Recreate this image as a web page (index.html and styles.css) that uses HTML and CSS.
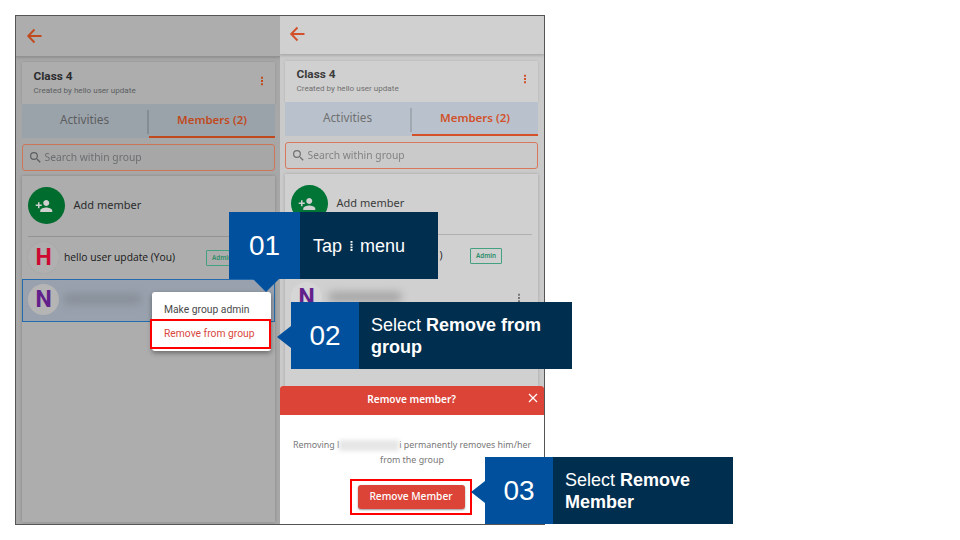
FILE: index.html
```html
<!DOCTYPE html>
<html lang="en">
<head>
<meta charset="utf-8">
<title>Remove a group member</title>
<link rel="stylesheet" href="styles.css">
</head>
<body>
<svg class="defs" width="0" height="0">
  <symbol id="back" viewBox="0 0 16 16"><path d="M15 8H2M8 1.5L1.7 8L8 14.5" fill="none" stroke="currentColor" stroke-width="1.9"/></symbol>
  <symbol id="dots" viewBox="0 0 4 10"><path d="M1 0.8h2v2H1zM1 4h2v2H1zM1 7.2h2v2H1z" fill="currentColor"/></symbol>
  <symbol id="search" viewBox="3 3 18 18"><path fill="currentColor" d="M15.5 14h-.79l-.28-.27A6.47 6.47 0 0 0 16 9.5 6.5 6.5 0 1 0 9.5 16c1.61 0 3.09-.59 4.23-1.57l.27.28v.79l5 4.99L20.49 19l-4.99-5zm-6 0a4.5 4.5 0 1 1 0-9 4.5 4.5 0 0 1 0 9z"/></symbol>
  <symbol id="person-add" viewBox="0 3 24 18"><path fill="currentColor" d="M15 12c2.21 0 4-1.79 4-4s-1.79-4-4-4-4 1.79-4 4 1.79 4 4 4zm-9-2V7H4v3H1v2h3v3h2v-3h3v-2H6zm9 4c-2.67 0-8 1.34-8 4v2h16v-2c0-2.66-5.33-4-8-4z"/></symbol>
</svg>
<main class="frame">
  <section class="phone phone-left">
    <header class="appbar"><svg class="back"><use href="#back"/></svg></header>
    <div class="body">
      <div class="group">
        <div><h1>Class 4</h1><p>Created by hello user update</p></div>
        <svg class="dots"><use href="#dots"/></svg>
      </div>
      <nav class="tabs"><span>Activities</span><i></i><b>Members (2)</b></nav>
      <div class="search"><svg><use href="#search"/></svg><span>Search within group</span></div>
      <div class="members">
        <div class="add"><div class="add-icon"><svg><use href="#person-add"/></svg></div><span>Add member</span></div>
        <div class="row"><div class="avatar h">H</div><span class="name">hello user update (You)</span><em>Admin</em></div>
        <div class="row selected"><div class="avatar n">N</div><span class="redacted"></span></div>
      </div>
    </div>
    <div class="menu"><div>Make group admin</div><div class="danger">Remove from group</div></div>
  </section>
  <section class="phone phone-right">
    <header class="appbar"><svg class="back"><use href="#back"/></svg></header>
    <div class="body">
      <div class="group">
        <div><h1>Class 4</h1><p>Created by hello user update</p></div>
        <svg class="dots"><use href="#dots"/></svg>
      </div>
      <nav class="tabs"><span>Activities</span><i></i><b>Members (2)</b></nav>
      <div class="search"><svg><use href="#search"/></svg><span>Search within group</span></div>
      <div class="members">
        <div class="add"><div class="add-icon"><svg><use href="#person-add"/></svg></div><span>Add member</span></div>
        <div class="row"><span class="name">)</span><em>Admin</em></div>
        <div class="row"><div class="avatar n">N</div><span class="redacted"></span><svg class="dots"><use href="#dots"/></svg></div>
      </div>
    </div>
    <div class="sheet">
      <div class="sheet-head"><span>Remove member?</span><svg viewBox="0 0 10 10"><path d="M1 1L9 9M9 1L1 9" stroke="#fff" stroke-width="1.2"/></svg></div>
      <p><span>Removing l</span><i class="smudge"></i><span>i permanently removes him/her</span><br><span>from the group</span></p>
      <div class="target"><button>Remove Member</button></div>
    </div>
  </section>
</main>
<div class="callout one"><div class="num">01</div><div class="tip">Tap <svg viewBox="0 0 4 10"><path d="M1 0h2v1.8H1zM1 2.7h2v1.8H1zM1 5.4h2v1.8H1zM1 8.1h2v1.8H1z" fill="#fff"/></svg> menu</div></div>
<div class="callout two"><div class="num">02</div><div class="tip"><p>Select <b>Remove from<br>group</b></p></div></div>
<div class="callout three"><div class="num">03</div><div class="tip"><p>Select <b>Remove<br>Member</b></p></div></div>
</body>
</html>
```
FILE: styles.css
```css
* { box-sizing: border-box; }
body { margin: 0; padding: 15px; width: 960px; height: 540px; overflow: hidden; background: #fff; font-family: "Noto Sans", sans-serif; }
h1, p { margin: 0; }
svg { display: block; flex: none; }
.defs { position: absolute; }
.frame { width: 530px; height: 510px; border: 1px solid #555; display: grid; grid-template-columns: 264px 264px; overflow: hidden; }
.phone { position: relative; height: 508px; overflow: hidden; display: flex; flex-direction: column; }
.phone-left { --page: #a7a7a7; --card: #adadad; --line: #929292; --tab: #9ba3aa; --accent: #c04a1e; --ink: #2b2c2e; --mute: #5c5f62; --edge: #cc7557; --green: #006c2e; --ring: #b5b5b5; background: var(--page); }
.phone-right { --page: #cacaca; --card: #d0d0d0; --line: #b0b0b0; --tab: #b9c2cc; --accent: #d2512a; --ink: #3b3b3b; --mute: #707070; --edge: #d9775b; --green: #007536; --ring: #d6d6d6; background: var(--page); }
.appbar { height: 41px; flex: none; background: var(--card); border-bottom: 1px solid var(--line); box-shadow: 0 1px 2px #0002; padding: 12px 0 0 10px; color: var(--accent); }
.phone-right .appbar { height: 39px; padding: 10px 0 0 9px; }
.back { width: 17px; height: 16px; }
.body { flex: 1; display: flex; flex-direction: column; padding: 5px 5px 2px 6px; }
.phone-right .body { padding: 6px 6px 0 5px; }
.group { height: 42px; background: var(--card); display: flex; justify-content: space-between; padding: 8px 11px 0 11.5px; box-shadow: 0 0 2px #0002; }
.phone-right .group { height: 41px; padding-top: 7px; }
h1 { font: 700 11.8px/13px Roboto, sans-serif; color: var(--ink); }
.group p { font: 8.08px/12px Roboto, sans-serif; margin-top: 1.5px; color: var(--mute); white-space: nowrap; }
.dots { width: 4px; height: 10px; color: var(--accent); margin-top: 6px; }
.tabs { height: 34px; background: var(--tab); display: grid; grid-template-columns: 125px 2px 1fr; text-align: center; font-size: 11.8px; line-height: 31px; color: var(--mute); }
.tabs i { background: #858d94; height: 24px; margin-top: 6px; }
.phone-right .tabs i { background: #a1a8b0; }
.tabs b { color: var(--accent); border-bottom: 2px solid var(--accent); font-weight: 600; font-size: 11.5px; }
.search { height: 27px; margin-top: 6px; border: 1px solid var(--edge); border-radius: 3px; display: flex; align-items: center; padding-left: 7px; gap: 3.5px; color: var(--mute); font-size: 10.3px; }
.search span { opacity: .8; margin-top: -2px; }
.search svg { width: 11px; height: 11px; }
.members { flex: 1; margin-top: 5px; background: var(--card); box-shadow: 0 0 3px #0003; display: flex; flex-direction: column; }
.add { height: 61px; margin: 0 6px; border-bottom: 1px solid var(--line); display: flex; align-items: center; gap: 8.5px; font-size: 11px; color: var(--ink); flex: none; }
.add > span { margin-top: -4px; }
.add-icon { width: 37px; height: 37px; border-radius: 50%; background: var(--green); display: grid; place-items: center; color: #d0d0d0; margin-top: -1px; padding-right: 5px; }
.add-icon svg { width: 18px; height: 14px; }
.row { height: 42px; flex: none; display: flex; align-items: center; padding-left: 6px; position: relative; }
.avatar { width: 31px; height: 31px; border-radius: 50%; background: var(--ring); font: 700 23px/31px Roboto, sans-serif; text-align: center; flex: none; margin-top: -2px; }
.phone-right .avatar { margin-top: -1px; }
.h { color: #cd0932; background: #b0b0b0; box-shadow: 0 0 2px #0001; } .n { color: #62208b; }
.name { font: 10.3px "Open Sans", sans-serif; margin: -2px 0 0 5px; color: #171717; width: 142px; white-space: nowrap; }
.phone-right .name { margin-left: 144.5px; width: 34.5px; padding-left: 4px; }
.row em { font: 600 6.3px/13px "Noto Sans", sans-serif; color: #2b8d68; border: 1px solid #43a180; height: 16px; width: 32px; text-align: center; border-radius: 1px; }
.selected { height: 43px; background: #98a1ad; border: 1px solid #246bad; padding-left: 5px; }
.selected .avatar { margin-top: -2px; }
.redacted { width: 77px; height: 10px; margin: -3px 0 0 5px; background: #777c84; filter: blur(4px); opacity: .5; }
.phone-right .redacted { background: #777; width: 72px; margin-left: 7px; }
.row .dots { color: #777; margin: 0 0 0 115.5px; }
.menu { position: absolute; left: 136px; top: 276px; width: 119px; height: 59px; border-radius: 3px; background: #fff; box-shadow: 0 2px 5px #0006; padding-top: 3px; font: 10.3px/27px Roboto, sans-serif; color: #4a4a4a; }
.menu div { padding-left: 12px; white-space: nowrap; height: 27px; line-height: 29px; }
.menu .danger { margin: -3px 0 0 -2px; width: 121px; height: 30px; border: 2px solid #f00; color: #d9483f; line-height: 25px; }
.sheet { position: absolute; left: 0; right: 0; top: 369.5px; height: 138.5px; background: #fff; border-radius: 3px 3px 0 0; overflow: hidden; }
.sheet-head { height: 29px; background: #db4437; color: #fff; display: flex; align-items: center; justify-content: flex-end; padding-right: 6px; font-size: 10.1px; font-weight: 600; }
.sheet-head span { margin: -3px 72px 0 0; }
.sheet-head svg { width: 10px; height: 10px; margin-top: -4px; }
.sheet p { padding-top: 22px; text-align: center; font-size: 8.9px; line-height: 15px; color: #777; white-space: nowrap; }
.smudge { display: inline-block; width: 60px; height: 11px; background: #d9d9d9; filter: blur(2px); opacity: .65; vertical-align: middle; }
.target { width: 122px; height: 36px; margin: 12.5px 0 0 69.5px; border: 2px solid #f00; display: grid; place-items: center; }
button { width: 107px; height: 24px; border: 0; border-radius: 3px; background: #db4437; color: #fff; font: 500 10.2px/22px "Noto Sans", sans-serif; padding: 0 0 2px; margin-left: 1px; box-shadow: 0 1px 2px #0006; }
.callout { position: absolute; display: flex; height: 67px; background: #002e4f; color: #fff; font: 18px/22px "Liberation Sans", sans-serif; }
.num { position: relative; width: 68px; background: #00509d; font-size: 28px; line-height: 68px; text-align: center; }
.num::after { content: ""; position: absolute; left: -14px; top: 24px; border: 11px solid transparent; border-left: 0; border-right: 14px solid #00509d; }
.tip { display: flex; align-items: center; padding-left: 12px; gap: 6.5px; white-space: nowrap; }
.tip svg { width: 5px; height: 10px; }
.one { left: 229px; top: 212px; width: 209px; }
.one .num { width: 71px; }
.one .tip { padding: 1px 0 0 13px; }
.one .num::after { left: 24px; top: 67px; border: 13px solid transparent; border-bottom: 0; border-top-color: #00509d; }
.two { left: 291px; top: 302px; width: 281px; }
.three { left: 485px; top: 457px; width: 248px; }
```
